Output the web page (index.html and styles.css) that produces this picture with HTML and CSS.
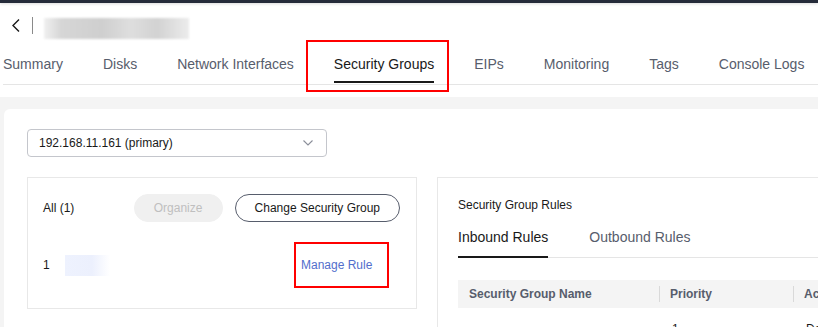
FILE: index.html
```html
<!DOCTYPE html>
<html lang="en">
<head>
    <meta charset="UTF-8">
    <meta name="viewport" content="width=device-width, initial-scale=1.0">
    <title>ECS - Security Groups</title>
    <link rel="stylesheet" href="styles.css">
</head>
<body>
    <div class="topbar"></div>

    <header class="page-head">
        <div class="title-row">
            <svg class="back" width="8" height="13" viewBox="0 0 8 13">
                <polyline points="7,0.5 1,6.5 7,12.5" fill="none" stroke="#191919" stroke-width="1.4"/>
            </svg>
            <span class="divider"></span>
            <span class="name-blur"></span>
        </div>
        <nav class="tabs">
            <span class="tab">Summary</span>
            <span class="tab">Disks</span>
            <span class="tab">Network Interfaces</span>
            <span class="tab active marked">Security Groups</span>
            <span class="tab">EIPs</span>
            <span class="tab">Monitoring</span>
            <span class="tab">Tags</span>
            <span class="tab">Console Logs</span>
        </nav>
    </header>

    <main class="content">
        <section class="panel">
            <div class="select">
                <span>192.168.11.161 (primary)</span>
                <svg width="10" height="6" viewBox="0 0 10 6">
                    <polyline points="0.5,0.5 5,5 9.5,0.5" fill="none" stroke="#8a8e99" stroke-width="1.1"/>
                </svg>
            </div>

            <div class="columns">
                <div class="sg-card">
                    <div class="sg-toolbar">
                        <span>All (1)</span>
                        <div class="btns">
                            <button class="btn disabled">Organize</button>
                            <button class="btn">Change Security Group</button>
                        </div>
                    </div>
                    <div class="sg-row">
                        <span class="idx">1</span>
                        <span class="sg-name-blur"></span>
                        <span class="manage"><a href="#">Manage Rule</a></span>
                    </div>
                </div>

                <div class="rules-card">
                    <div class="rules-title">Security Group Rules</div>
                    <div class="subtabs">
                        <span class="subtab active">Inbound Rules</span>
                        <span class="subtab">Outbound Rules</span>
                    </div>
                    <table class="rules">
                        <thead>
                            <tr>
                                <th class="c-name">Security Group Name</th>
                                <th class="c-prio">Priority</th>
                                <th class="c-act">Action</th>
                            </tr>
                        </thead>
                        <tbody>
                            <tr>
                                <td></td>
                                <td>1</td>
                                <td>Deny</td>
                            </tr>
                        </tbody>
                    </table>
                </div>
            </div>
        </section>
    </main>
</body>
</html>
```

FILE: styles.css
```css
body {
    margin: 0;
    font-family: "Liberation Sans", Arial, sans-serif;
    color: #191919;
    background: #f4f4f4;
    overflow: hidden;
    height: 327px;
}

.topbar {
    height: 3px;
    background: #252b3a;
    box-shadow: 0 1px 3px rgba(0, 0, 0, 0.15);
    position: relative;
}

.page-head {
    background: #fff;
    padding-bottom: 12px;
}

.title-row {
    height: 42px;
    display: flex;
    align-items: center;
    padding-left: 12px;
}

.back {
    margin-top: 2px;
}

.divider {
    width: 1px;
    height: 17px;
    background: #8a8a8a;
    margin-left: 12px;
    margin-top: 2px;
}

.name-blur {
    width: 145px;
    height: 21px;
    margin-left: 11px;
    margin-top: 8px;
    background: linear-gradient(90deg, #f0f0f0 0%, #d6d6d6 12%, #cfcfcf 40%, #dedede 60%, #d2d2d2 78%, #ececec 100%);
    filter: blur(1px);
}

.tabs {
    display: flex;
    gap: 40px;
    margin-left: 3px;
    height: 39px;
    border-bottom: 1px solid #e5e5e5;
    font-size: 14px;
}

.tab {
    position: relative;
    padding-top: 9px;
    line-height: 20px;
    color: #575d6c;
    white-space: nowrap;
}

.tab.active {
    color: #191919;
}

.tab.active::after {
    content: "";
    position: absolute;
    left: 0;
    right: 0;
    bottom: 1px;
    height: 2px;
    background: #191919;
}

/* annotation box */
.tab.marked::before {
    content: "";
    position: absolute;
    left: -28px;
    right: -15px;
    top: -5px;
    bottom: -8px;
    border: 2px solid #f00;
}

.content {
    padding: 12px 0 0 4px;
}

.panel {
    background: #fff;
    border-radius: 6px 0 0 0;
    padding: 20px 0 40px 23px;
}

.select {
    box-sizing: border-box;
    width: 300px;
    height: 28px;
    border: 1px solid #c4c6cc;
    border-radius: 4px;
    display: flex;
    align-items: center;
    justify-content: space-between;
    padding: 0 13px 0 11px;
    font-size: 12px;
}

.columns {
    display: flex;
    gap: 20px;
    margin-top: 20px;
    align-items: flex-start;
}

.sg-card {
    flex: none;
    box-sizing: border-box;
    width: 390px;
    border: 1px solid #e8e8e8;
    padding: 16px 16px 20px 15px;
    font-size: 12px;
}

.sg-toolbar {
    display: flex;
    align-items: center;
    height: 28px;
    white-space: nowrap;
}

.btns {
    margin-left: auto;
    display: flex;
    gap: 12px;
}

.btn {
    box-sizing: border-box;
    height: 28px;
    border-radius: 14px;
    border: 1px solid #575d6c;
    background: #fff;
    font-family: inherit;
    font-size: 12px;
    color: #191919;
    padding: 0 19px;
    white-space: nowrap;
}

.btn.disabled {
    width: 89px;
    padding: 0;
    border-color: #f0f0f0;
    background: #f0f0f0;
    color: #bfbfbf;
}

.sg-row {
    display: flex;
    align-items: center;
    margin-top: 20px;
}

.idx {
    width: 22px;
}

.sg-name-blur {
    width: 45px;
    height: 21px;
    background: linear-gradient(90deg, #eef2fe 0%, #ecf0fd 60%, #fff 100%);
}

.manage {
    box-sizing: border-box;
    margin-left: auto;
    margin-right: 11px;
    width: 95px;
    height: 46px;
    border: 2px solid #f00;
    padding-left: 5px;
    display: flex;
    align-items: center;
    white-space: nowrap;
}

.manage a {
    color: #526ecc;
    text-decoration: none;
}

.rules-card {
    flex: none;
    width: 600px;
    border: 1px solid #e8e8e8;
    border-right: none;
    padding: 18px 0 0 20px;
    height: 160px;
}

.rules-title {
    font-size: 12px;
    line-height: 18px;
}

.subtabs {
    display: flex;
    gap: 41px;
    margin-top: 13px;
    border-bottom: 1px solid #e5e5e5;
    font-size: 14px;
}

.subtab {
    line-height: 20px;
    padding-bottom: 9px;
    border-bottom: 2px solid transparent;
    margin-bottom: -1px;
    color: #575d6c;
}

.subtab.active {
    color: #191919;
    border-bottom-color: #191919;
}

.rules {
    margin-top: 22px;
    border-collapse: collapse;
    table-layout: fixed;
    width: 560px;
    font-size: 12px;
}

.rules th {
    position: relative;
    height: 28px;
    padding: 0 0 0 11px;
    background: #f4f4f4;
    text-align: left;
    font-weight: bold;
    color: #575d6c;
}

.rules th + th::before {
    content: "";
    position: absolute;
    left: 0;
    top: 6px;
    width: 1px;
    height: 16px;
    background: #d9d9d9;
}

.c-name { width: 190px; }
.c-prio { width: 123px; }

.rules td {
    padding: 12px 0 0 13px;
    line-height: 18px;
    vertical-align: top;
}
```
